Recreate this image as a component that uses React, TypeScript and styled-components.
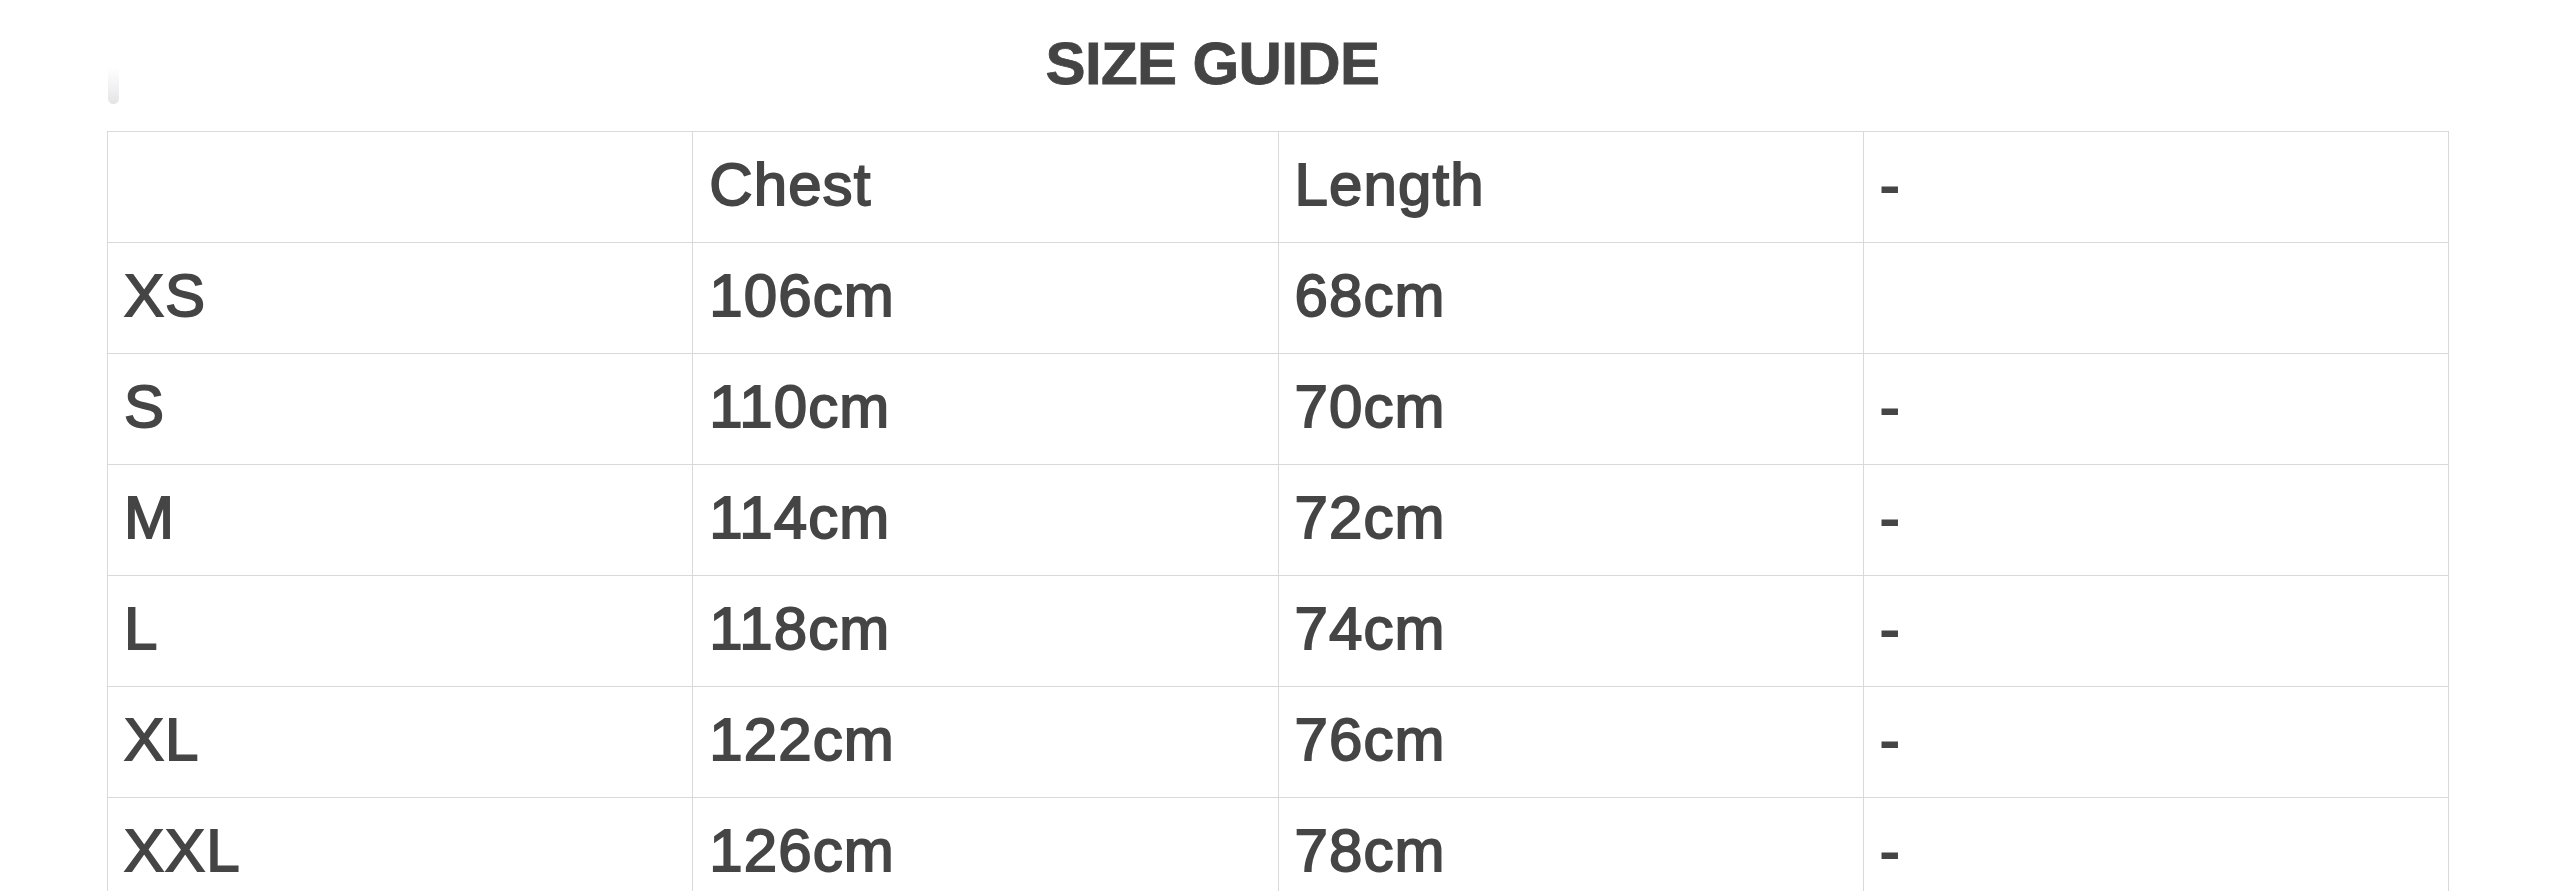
import React from "react";
import styled, { createGlobalStyle } from "styled-components";

const GlobalStyle = createGlobalStyle`
  html, body {
    margin: 0;
    padding: 0;
    background: #ffffff;
  }
  body {
    font-family: "Liberation Sans", Arial, Helvetica, sans-serif;
    color: #454545;
  }
`;

const rows = [
  { size: "XS", chest: "106cm", length: "68cm", extra: "" },
  { size: "S", chest: "110cm", length: "70cm", extra: "-" },
  { size: "M", chest: "114cm", length: "72cm", extra: "-" },
  { size: "L", chest: "118cm", length: "74cm", extra: "-" },
  { size: "XL", chest: "122cm", length: "76cm", extra: "-" },
  { size: "XXL", chest: "126cm", length: "78cm", extra: "-" },
];

export default function App() {
  return (
    <>
      <GlobalStyle />
      <Page>
        <TitleRow>
          <Pill />
          <Title>SIZE GUIDE</Title>
        </TitleRow>
        <SizeTable>
          <tbody>
            <tr>
              <Cell></Cell>
              <Cell>Chest</Cell>
              <Cell>Length</Cell>
              <Cell>-</Cell>
            </tr>
            {rows.map((r) => (
              <tr key={r.size}>
                <Cell>{r.size}</Cell>
                <Cell>{r.chest}</Cell>
                <Cell>{r.length}</Cell>
                <Cell>{r.extra}</Cell>
              </tr>
            ))}
          </tbody>
        </SizeTable>
      </Page>
    </>
  );
}

const Page = styled.div`
  width: 2550px;
  box-sizing: border-box;
  padding-left: 107px;
`;

const TitleRow = styled.div`
  display: grid;
  grid-template-columns: 12px 2329px;
  height: 131px;
`;

const Pill = styled.div`
  width: 11px;
  height: 37px;
  margin-top: 67px;
  margin-left: 1px;
  border-radius: 0 0 6px 6px;
  background: linear-gradient(to bottom, #ffffff 0%, #f1f1f3 55%, #e4e4e6 100%);
`;

const Title = styled.h1`
  margin: 0;
  padding-top: 34px;
  padding-right: 142px;
  text-align: center;
  font-size: 60px;
  line-height: 60px;
  font-weight: 700;
  letter-spacing: -0.6px;
  -webkit-text-stroke: 0.8px #444444;
  color: #444444;
`;

const SizeTable = styled.table`
  width: 2342px;
  table-layout: fixed;
  border-collapse: collapse;
  border: 1px solid #d9d9d9;
`;

const Cell = styled.td`
  box-sizing: border-box;
  height: 111px;
  padding: 23px 16px 27px 16px;
  border: 1px solid #d9d9d9;
  font-size: 60px;
  line-height: 60px;
  font-weight: 400;
  letter-spacing: 1.1px;
  -webkit-text-stroke: 1.8px #454545;
  color: #454545;
  vertical-align: top;
  white-space: nowrap;
`;
